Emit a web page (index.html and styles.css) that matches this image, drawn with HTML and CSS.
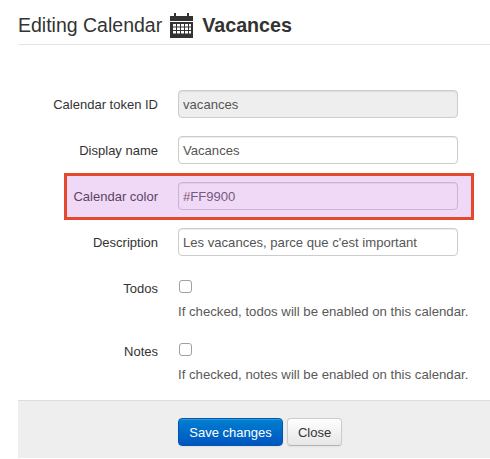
FILE: index.html
```html
<!DOCTYPE html>
<html lang="en">
<head>
<meta charset="utf-8">
<title>Editing Calendar</title>
<link rel="stylesheet" href="styles.css">
</head>
<body>
<div class="modal">
  <header class="modal-header">
    <h3 class="title">Editing Calendar
      <svg class="cal-icon" viewBox="0 0 23 25" width="23" height="25" aria-hidden="true">
        <path fill="#333" d="M4 0h2v3h11V0h2v3h4v5H0V3h4z"/>
        <path fill="#333" fill-rule="evenodd" d="M0 9h23v16H0zM3 11v2.500h3V11zM7 11v2.500h3V11zM11 11v2.500h3V11zM15 11v2.500h3V11zM19 11v2.500h2V11zM3 14.500V17h3v-2.500zM7 14.500V17h3v-2.500zM11 14.500V17h3v-2.500zM15 14.500V17h3v-2.500zM19 14.500V17h2v-2.500zM3 18v2.500h3V18zM7 18v2.500h3V18zM11 18v2.500h3V18zM15 18v2.500h3V18zM19 18v2.500h2V18z"/>
      </svg>
      <strong>Vacances</strong></h3>
  </header>
  <form class="form">
    <div class="row">
      <label class="label">Calendar token ID</label>
      <input class="input input-ro" type="text" value="vacances" readonly>
    </div>
    <div class="row">
      <label class="label">Display name</label>
      <input class="input" type="text" value="Vacances">
    </div>
    <div class="row">
      <label class="label">Calendar color</label>
      <input class="input" type="text" value="#FF9900">
      <div class="highlight"></div>
    </div>
    <div class="row">
      <label class="label">Description</label>
      <input class="input" type="text" value="Les vacances, parce que c'est important">
    </div>
    <div class="row row-check">
      <label class="label">Todos</label>
      <div class="check-col">
        <span class="check"></span>
        <p class="help">If checked, todos will be enabled on this calendar.</p>
      </div>
    </div>
    <div class="row row-check">
      <label class="label">Notes</label>
      <div class="check-col">
        <span class="check"></span>
        <p class="help">If checked, notes will be enabled on this calendar.</p>
      </div>
    </div>
  </form>
  <footer class="actions">
    <button class="btn btn-primary" type="button">Save changes</button>
    <button class="btn btn-close" type="button">Close</button>
  </footer>
</div>
</body>
</html>
```
FILE: styles.css
```css
html, body {
  margin: 0;
  padding: 0;
  background: #fff;
}
body {
  font-family: "Liberation Sans", Arial, sans-serif;
  font-size: 13px;
  color: #333;
  width: 490px;
  height: 459px;
  overflow: hidden;
}
.modal {
  margin-left: 18px;
}
.modal-header {
  height: 44px;
  border-bottom: 1px solid #e5e5e5;
}
.title {
  margin: 0;
  padding-top: 10px;
  font-size: 19.500px;
  font-weight: 400;
  line-height: 30px;
  display: flex;
  align-items: center;
  gap: 9px;
}
.title strong {
  font-weight: 700;
  font-size: 19.700px;
}
.cal-icon {
  flex: none;
  margin-right: 0;
  margin-left: -1px;
}
.form {
  padding-top: 45px;
  display: flex;
  flex-direction: column;
  gap: 18px;
}
.row {
  position: relative;
  display: flex;
  align-items: center;
  gap: 20px;
}
.label {
  width: 140px;
  text-align: right;
  flex: none;
}
.input {
  width: 280px;
  height: 28px;
  box-sizing: border-box;
  padding: 4px;
  border: 1px solid #ccc;
  border-radius: 4px;
  font: 13.100px "Liberation Sans", Arial, sans-serif;
  color: #555;
  background: #fff;
  box-shadow: inset 0 1px 1px rgba(0,0,0,.075);
  margin: 0;
}
.input-ro {
  background: #eee;
}
.highlight {
  position: absolute;
  left: 46px;
  top: -9px;
  width: 404px;
  height: 41px;
  border: 3px solid #e5492d;
  background: rgba(200, 110, 225, .27);
  pointer-events: none;
}
.row-check {
  align-items: flex-start;
  margin-top: 5px;
}
.row-check + .row-check {
  margin-top: 4px;
}
.row-check .label {
  padding-top: 2px;
}
.check-col {
  display: flex;
  flex-direction: column;
  padding-top: 1px;
}
.check {
  width: 11px;
  height: 11px;
  margin-left: 1px;
  border: 1px solid #a0a0a0;
  border-radius: 3px;
  background: #fff;
}
.help {
  margin: 10px 0 0;
  font-size: 13.200px;
  line-height: 17px;
  color: #595959;
}
.actions {
  margin-top: 17px;
  height: 58px;
  box-sizing: border-box;
  background: #eee;
  border-top: 1px solid #ddd;
  padding: 17px 0 0 160px;
  display: flex;
  gap: 4px;
  align-items: flex-start;
}
.btn {
  height: 28px;
  margin: 0;
  padding: 0;
  border: 1px solid #ccc;
  border-bottom-color: #b3b3b3;
  border-radius: 4px;
  background: linear-gradient(#fff, #e6e6e6);
  color: #333;
  font: 13px "Liberation Sans", Arial, sans-serif;
  box-shadow: inset 0 1px 0 rgba(255,255,255,.2), 0 1px 2px rgba(0,0,0,.05);
}
.btn-primary {
  width: 105px;
  color: #fff;
  border-color: #0055b3;
  background: linear-gradient(#0080d0, #0055c0);
}
.btn-close {
  width: 55px;
}
```
